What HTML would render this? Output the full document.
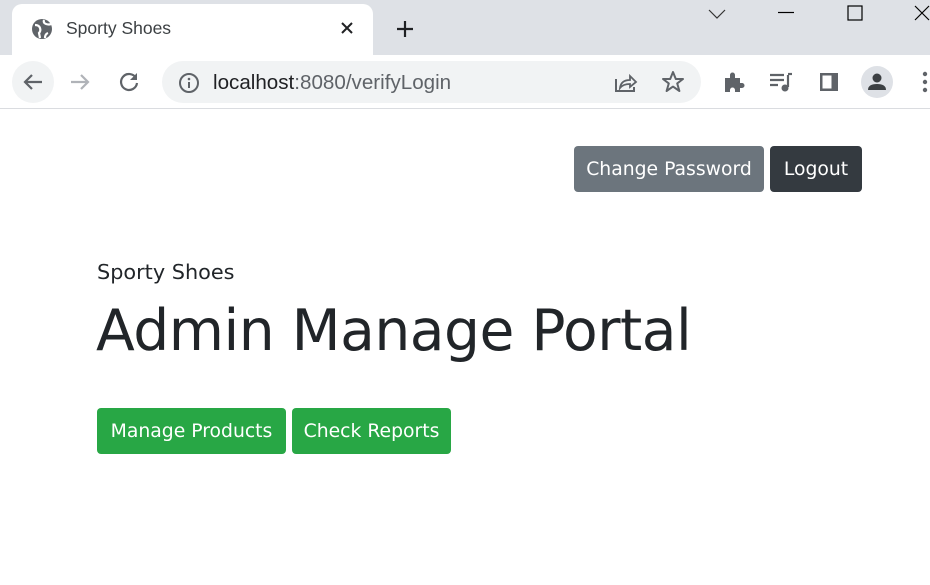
<!DOCTYPE html>
<html><head><meta charset="utf-8"><style>
*{margin:0;padding:0;box-sizing:border-box}
body{width:930px;height:585px;overflow:hidden;background:#fff;font-family:"Liberation Sans","DejaVu Sans",sans-serif;position:relative}
.top{position:absolute;left:0;top:0;width:930px;height:55px;background:#dee1e6}
.tab{position:absolute;left:12px;top:4px;width:361px;height:52px;background:#fff;border-radius:10px 10px 0 0}
.tabt{position:absolute;left:66px;top:18px;font-size:17.5px;color:#3c4043}
.bar{position:absolute;left:0;top:55px;width:930px;height:54px;background:#fff;border-bottom:1px solid #dadce0}
.omni{position:absolute;left:162px;top:61px;width:539px;height:42px;background:#f1f3f4;border-radius:21px}
.url{position:absolute;left:213px;top:71px;font-size:20.6px;color:#202124}
.url span{color:#5f6368}
.btn{position:absolute;height:46px;border-radius:4px;color:#fff;font-size:18.8px;line-height:47px;text-align:center;font-family:"DejaVu Sans","Liberation Sans",sans-serif}
svg{position:absolute}
</style></head><body>
<div class="top"></div>
<div class="tab"></div>
<svg style="left:31px;top:18px" width="22" height="22" viewBox="0 0 22 22"><circle cx="11" cy="11" r="10" fill="#5f6368"/><path d="M4 7q4 0 5 3t-1 5l1 5M13 2q-1 3 2 4t5 0M14 20q0-4 3-5" stroke="#fff" stroke-width="2.2" fill="none"/></svg>
<div class="tabt">Sporty Shoes</div>
<svg style="left:340px;top:21px" width="14" height="14"><path d="M2 2L12 12M12 2L2 12" stroke="#202124" stroke-width="2"/></svg>
<svg style="left:395px;top:19px" width="20" height="20"><path d="M10 2V18M2 10H18" stroke="#202124" stroke-width="2.2"/></svg>
<svg style="left:708px;top:8px" width="18" height="12"><path d="M1 2L9 10L17 2" stroke="#333" stroke-width="1.2" fill="none"/></svg>
<svg style="left:778px;top:11px" width="18" height="4"><path d="M0 1.5H16" stroke="#000" stroke-width="1.2"/></svg>
<svg style="left:847px;top:5px" width="16" height="16"><rect x="1" y="1" width="14" height="14" fill="none" stroke="#000" stroke-width="1.2"/></svg>
<svg style="left:914px;top:5px" width="16" height="16"><path d="M1 1L15 15M15 1L1 15" stroke="#000" stroke-width="1.2"/></svg>
<div class="bar"></div>
<svg style="left:12px;top:61px" width="42" height="42"><circle cx="21" cy="21" r="21" fill="#f1f3f4"/><path d="M30 21H13M20 14L13 21L20 28" stroke="#5f6368" stroke-width="2.2" fill="none"/></svg>
<svg style="left:68px;top:71px" width="24" height="22"><path d="M3 11H20M13 4L20 11L13 18" stroke="#b0b3b8" stroke-width="2.2" fill="none"/></svg>
<svg style="left:117px;top:70px" width="24" height="24"><path d="M19 8A8 8 0 1 0 20 13" stroke="#5f6368" stroke-width="2.2" fill="none"/><path d="M20 3V10H13Z" fill="#5f6368"/></svg>
<div class="omni"></div>
<svg style="left:178px;top:72px" width="22" height="22"><circle cx="11" cy="11" r="9" stroke="#5f6368" stroke-width="2" fill="none"/><path d="M11 10V16" stroke="#5f6368" stroke-width="2"/><circle cx="11" cy="7" r="1.3" fill="#5f6368"/></svg>
<div class="url">localhost<span>:8080/verifyLogin</span></div>
<svg style="left:613px;top:70px" width="26" height="24"><path d="M3 9V21H21V17" stroke="#5f6368" stroke-width="2" fill="none"/><path d="M7 18Q8 10 17 10V6L23 12L17 17V14Q10 14 7 18Z" stroke="#5f6368" stroke-width="1.8" fill="none"/></svg>
<svg style="left:661px;top:70px" width="24" height="24"><path d="M12 2L14.8 9H22L16.2 13.4L18.4 21L12 16.6L5.6 21L7.8 13.4L2 9H9.2Z" stroke="#5f6368" stroke-width="2" fill="none" stroke-linejoin="round"/></svg>
<svg style="left:722px;top:70px" width="24" height="24"><path d="M3 8H8V5A2.5 2.5 0 0 1 13 5V8H18V13H20A2.5 2.5 0 0 1 20 18H18V22H13V20A2.5 2.5 0 0 0 8 20V22H3Z" fill="#5f6368"/></svg>
<svg style="left:768px;top:71px" width="26" height="22"><path d="M2 4H16M2 9H16M2 14H10" stroke="#5f6368" stroke-width="2.2"/><path d="M20 4V16" stroke="#5f6368" stroke-width="2.2"/><path d="M20 3H24" stroke="#5f6368" stroke-width="2.2"/><circle cx="17" cy="17" r="3.5" fill="#5f6368"/></svg>
<svg style="left:818px;top:71px" width="22" height="22"><rect x="2" y="2" width="18" height="18" fill="#5f6368"/><rect x="4.5" y="4.5" width="9" height="13" fill="#fff"/></svg>
<svg style="left:860px;top:65px" width="34" height="34"><circle cx="17" cy="17" r="16" fill="#dee1e6"/><circle cx="17" cy="13" r="4.5" fill="#3c4043"/><path d="M8 25Q8 19 17 19Q26 19 26 25Z" fill="#3c4043"/></svg>
<svg style="left:920px;top:70px" width="10" height="26"><circle cx="5" cy="4" r="2.2" fill="#5f6368"/><circle cx="5" cy="12" r="2.2" fill="#5f6368"/><circle cx="5" cy="20" r="2.2" fill="#5f6368"/></svg>

<div class="btn" style="left:574px;top:146px;width:190px;background:#6c757d">Change Password</div>
<div class="btn" style="left:770px;top:146px;width:92px;background:#343a40">Logout</div>
<div style="position:absolute;left:97px;top:260px;font-size:20.8px;color:#212529;font-family:'DejaVu Sans',sans-serif">Sporty Shoes</div>
<div style="position:absolute;left:96px;top:298px;font-size:56.7px;color:#212529;font-family:'DejaVu Sans',sans-serif;letter-spacing:-0.5px">Admin Manage Portal</div>
<div class="btn" style="left:97px;top:408px;width:189px;background:#28a745">Manage Products</div>
<div class="btn" style="left:292px;top:408px;width:159px;background:#28a745">Check Reports</div>
</body></html>
